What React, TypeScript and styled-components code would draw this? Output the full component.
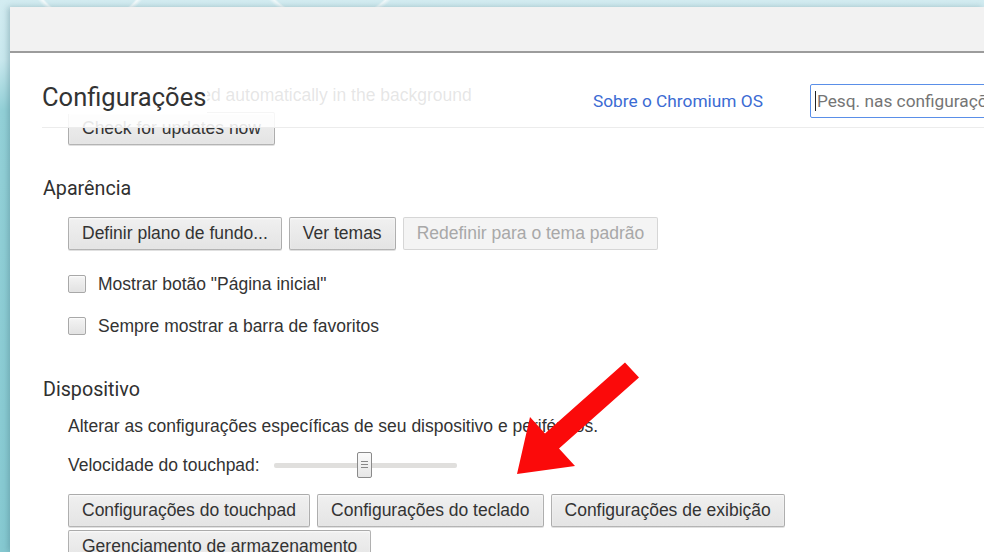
import styled, { createGlobalStyle } from 'styled-components';

const GlobalStyle = createGlobalStyle`
  html, body {
    margin: 0;
    padding: 0;
    width: 984px;
    height: 552px;
    overflow: hidden;
  }
  body {
    background:
      radial-gradient(circle at 90px -40px, transparent 60px, rgba(255,255,255,0.8) 62px, transparent 66px),
      radial-gradient(circle at 330px -60px, transparent 80px, rgba(255,255,255,0.7) 82px, transparent 86px),
      linear-gradient(180deg, #d3ecf1 0px, #c9e8ee 60px, #93d0d7 110px, #86c9d1 552px);
    font-family: "Liberation Sans", Arial, sans-serif;
  }
`;

const Desktop = styled.div`
  height: 552px;
  padding: 7px 0 0 10px;
  box-sizing: border-box;
  display: flex;
`;

const Window = styled.div`
  flex: 1;
  display: flex;
  flex-direction: column;
  background: #fff;
  box-shadow: -2px 0 6px rgba(60, 110, 120, 0.35);
  overflow: hidden;
`;

const Toolbar = styled.div`
  height: 44px;
  flex-shrink: 0;
  background: #f2f2f2;
  border-bottom: 2px solid #9c9c9c;
`;

const Page = styled.div`
  position: relative;
  flex: 1;
  overflow: hidden;
`;

const Header = styled.header`
  position: absolute;
  top: 0;
  left: 32px;
  right: 0;
  height: 75px;
  box-sizing: border-box;
  padding-top: 22px;
  display: grid;
  grid-template-columns: 504px auto 240px;
  column-gap: 47px;
  align-items: center;
  background: rgba(255, 255, 255, 0.88);
  border-bottom: 1px solid #ececec;
`;

const Title = styled.h1`
  margin: -8px 0 0;
  font-family: Roboto, "Liberation Sans", sans-serif;
  font-weight: 400;
  font-size: 25.5px;
  color: #333;
  line-height: 34px;
  justify-self: start;
  background: #fff;
  padding-right: 1px;
`;

const AboutLink = styled.a`
  font-family: Roboto, "Liberation Sans", sans-serif;
  font-size: 17.3px;
  color: #3b6bd3;
  text-decoration: none;
  white-space: nowrap;
`;

const SearchBox = styled.div`
  height: 34px;
  box-sizing: border-box;
  border: 1px solid #5a8fe8;
  border-radius: 2px;
  display: flex;
  align-items: center;
  padding-left: 4px;
  background: #fff;
  font-family: Roboto, "Liberation Sans", sans-serif;
  font-size: 17.3px;
  color: #757575;
  white-space: nowrap;
  overflow: hidden;
`;

const Caret = styled.span`
  width: 1px;
  height: 20px;
  background: #222;
  margin-right: 1px;
`;

const Content = styled.div`
  padding-left: 33px;
  font-size: 17.5px;
`;

const Updates = styled.div`
  padding-top: 32px;
  padding-left: 25px;
`;

const FadedText = styled.div`
  line-height: 20px;
  color: #333;
  white-space: nowrap;
`;

const Section = styled.section<{ $gap: number }>`
  margin-top: ${p => p.$gap}px;
`;

const SectionTitle = styled.h2`
  margin: 0;
  font-family: Roboto, "Liberation Sans", sans-serif;
  font-weight: 400;
  font-size: 19.7px;
  line-height: 24px;
  color: #303030;
`;

const SectionBody = styled.div`
  padding-left: 25px;
  display: flex;
  flex-direction: column;
  align-items: flex-start;
`;

const ButtonRow = styled.div<{ $top: number }>`
  display: flex;
  flex-wrap: wrap;
  gap: 3px 7px;
  margin-top: ${p => p.$top}px;
  max-width: 740px;
`;

const Button = styled.button`
  height: 33px;
  box-sizing: border-box;
  padding: 0 13px;
  font-family: "Liberation Sans", Arial, sans-serif;
  font-size: 17.5px;
  color: #333;
  background: linear-gradient(#f0f0f0, #e4e4e4);
  border: 1px solid rgba(0, 0, 0, 0.25);
  border-radius: 2px;
  box-shadow: 0 1px 0 rgba(0, 0, 0, 0.12), inset 0 1px 2px rgba(255, 255, 255, 0.75);
  white-space: nowrap;

  &:disabled {
    color: #a8a8a8;
    background: #f4f4f4;
    border-color: rgba(0, 0, 0, 0.12);
    box-shadow: none;
  }
`;

const CheckRow = styled.label<{ $top: number }>`
  display: flex;
  align-items: center;
  gap: 12px;
  height: 24px;
  margin-top: ${p => p.$top}px;
  color: #333;
`;

const CheckBox = styled.span`
  width: 16px;
  height: 16px;
  border: 1px solid #a8a8a8;
  border-radius: 2px;
  background: linear-gradient(#f4f4f4, #e2e2e2);
  box-shadow: inset 0 1px 2px rgba(255, 255, 255, 0.8);
`;

const Description = styled.p`
  margin: 14px 0 0;
  line-height: 20px;
  color: #333;
  white-space: nowrap;
`;

const SliderRow = styled.div`
  display: flex;
  align-items: center;
  gap: 14px;
  height: 28px;
  margin-top: 15px;
  color: #333;
`;

const Track = styled.div`
  position: relative;
  width: 183px;
  height: 5px;
  background: #e0dfdd;
  border-radius: 2px;
`;

const Thumb = styled.div`
  position: absolute;
  top: -11px;
  width: 15px;
  height: 26px;
  margin-left: -8px;
  box-sizing: border-box;
  border: 1px solid #8a8a8a;
  border-radius: 2px;
  background: linear-gradient(#fafafa, #e6e6e6);
  display: flex;
  flex-direction: column;
  justify-content: center;
  align-items: center;
  gap: 2px;

  span {
    width: 7px;
    height: 1px;
    background: #888;
  }
`;

const Arrow = styled.svg`
  position: absolute;
  left: 0;
  top: 0;
  width: 974px;
  height: 498px;
  pointer-events: none;
`;

export default function App() {
  const sliderValue = 0.5;

  return (
    <>
      <GlobalStyle />
      <Desktop>
        <Window>
          <Toolbar />
          <Page>
            <Content>
              <Updates>
                <FadedText>Updates are loaded automatically in the background</FadedText>
                <ButtonRow $top={7}>
                  <Button>Check for updates now</Button>
                </ButtonRow>
              </Updates>

              <Section $gap={32}>
                <SectionTitle>Aparência</SectionTitle>
                <SectionBody>
                  <ButtonRow $top={16}>
                    <Button>Definir plano de fundo...</Button>
                    <Button>Ver temas</Button>
                    <Button disabled>Redefinir para o tema padrão</Button>
                  </ButtonRow>
                  <CheckRow $top={22}>
                    <CheckBox />
                    Mostrar botão "Página inicial"
                  </CheckRow>
                  <CheckRow $top={18}>
                    <CheckBox />
                    Sempre mostrar a barra de favoritos
                  </CheckRow>
                </SectionBody>
              </Section>

              <Section $gap={40}>
                <SectionTitle>Dispositivo</SectionTitle>
                <SectionBody>
                  <Description>
                    Alterar as configurações específicas de seu dispositivo e periféricos.
                  </Description>
                  <SliderRow>
                    Velocidade do touchpad:
                    <Track>
                      <Thumb style={{ left: `${sliderValue * 100}%` }}>
                        <span />
                        <span />
                        <span />
                      </Thumb>
                    </Track>
                  </SliderRow>
                  <ButtonRow $top={15}>
                    <Button>Configurações do touchpad</Button>
                    <Button>Configurações do teclado</Button>
                    <Button>Configurações de exibição</Button>
                    <Button>Gerenciamento de armazenamento</Button>
                  </ButtonRow>
                </SectionBody>
              </Section>
            </Content>

            <Header>
              <Title>Configurações</Title>
              <AboutLink href="#">Sobre o Chromium OS</AboutLink>
              <SearchBox>
                <Caret />
                Pesq. nas configurações
              </SearchBox>
            </Header>

            <Arrow viewBox="0 0 974 498">
              <polygon
                fill="#fb0a0a"
                points="615,309.5 629,324.5 549,395.5 565,413 507,421 520,364 535,380.5"
              />
            </Arrow>
          </Page>
        </Window>
      </Desktop>
    </>
  );
}
